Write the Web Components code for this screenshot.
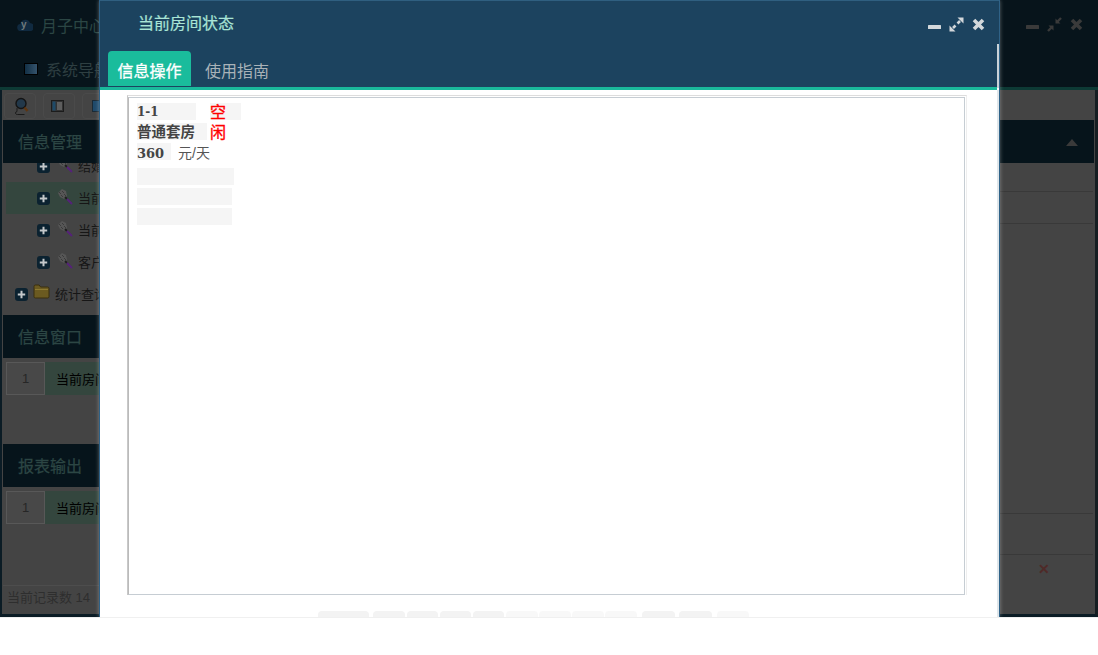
<!DOCTYPE html>
<html lang="zh"><head><meta charset="utf-8"><title>当前房间状态</title>
<style>
html,body{margin:0;height:100%;background:#fff;overflow:hidden}
body{font-family:"Liberation Sans","Noto Sans CJK SC",sans-serif}
desk-top{width:1098px;height:655px}
</style></head><body>
<desk-top>
  <back-window slot="back"></back-window>
  <room-dialog slot="front"></room-dialog>
</desk-top>
<script>
const FONT='"Liberation Sans","Noto Sans CJK SC",sans-serif';
const plus=`<svg width="13" height="13" viewBox="0 0 13 13"><rect width="13" height="13" rx="3" fill="#0b2230"/><path d="M6.5 2.8v7.4M2.8 6.5h7.4" stroke="#c4c8ca" stroke-width="2"/></svg>`;
const wand=`<svg width="16" height="16" viewBox="0 0 16 16"><path d="M1 4L5 0l4 2 1 5-3 3-4-2z" fill="#565656"/><path d="M2 3l2 2M5 2l2 2M4 6l2 2M7 5l2 2" stroke="#3a3a3a"/><path d="M8 8l2 2" stroke="#1f1f1f" stroke-width="1.800"/><path d="M10 10l5 5" stroke="#55207a" stroke-width="1.800"/></svg>`;
const folder=`<svg width="17" height="15" viewBox="0 0 17 15"><path d="M1 3.500V2.500Q1 1 2.500 1h3.600l1.500 2H14.500Q16 3 16 4.500v8.200Q16 14 14.500 14h-12Q1 14 1 12.700z" fill="#6b5a20" stroke="#3a2f0e"/><path d="M2 5.500h13" stroke="#8d7a32"/></svg>`;
function sh(el,html){el.attachShadow({mode:'open'}).innerHTML=html}
function def(n,fn){customElements.define(n,class extends HTMLElement{connectedCallback(){if(!this.shadowRoot)fn(this)}})}

def('desk-top',e=>sh(e,`<style>
:host{display:block;position:relative;overflow:hidden;background:#fff}
.line{position:absolute;left:0;right:0;top:617px;height:1px;background:#eee}
::slotted([slot=back]){position:absolute;left:0;top:0;width:1098px;height:617px}
::slotted([slot=front]){position:absolute;left:99px;top:0;width:901px;height:617px}
</style><div class="line"></div><slot name="back"></slot><slot name="front"></slot>`));

def('win-controls',e=>{const c=e.getAttribute('color')||'#d3d8db',back=e.hasAttribute('restore');
sh(e,`<style>:host{display:flex;align-items:flex-start;gap:8px;line-height:0}svg{display:block}</style>
<svg width="13" height="14" viewBox="0 0 13 14"><rect y="8" width="13" height="4" rx=".5" fill="${c}"/></svg>
<svg width="15" height="15" viewBox="0 0 15 15">${back
 ?`<path d="M14 1l-4 4M1 14l4-4" stroke="${c}" stroke-width="2.400"/><path d="M8.500 1.500v5h5zM6.500 13.500v-5h-5z" fill="${c}"/>`
 :`<path d="M11 4L8.500 6.500M4 11l2.500-2.500" stroke="${c}" stroke-width="2.600"/><path d="M8.500 0.500h6v6zM0.500 8.500v6h6z" fill="${c}"/>`}</svg>
<svg width="13" height="13" viewBox="0 0 13 13" style="margin-top:1px"><path d="M2 2l9 9M11 2l-9 9" stroke="${c}" stroke-width="3.600"/></svg>`)});

def('panel-head',e=>sh(e,`<style>:host{display:flex;align-items:center;height:43px;box-sizing:border-box;padding-bottom:2px;background:#06141b;color:#2c4644;font:16px ${FONT};-webkit-text-stroke:.25px #2c4644;padding-left:15px;flex:none;position:relative}
::slotted(svg){position:absolute;right:16px;top:19px}</style><slot></slot>`));

def('tree-row',e=>{const f=e.getAttribute('level')==='1',act=e.hasAttribute('active');
sh(e,`<style>:host{display:flex;align-items:center;height:32px;flex:none;margin-left:3px;padding-left:${f?9:31}px;color:#161616;font:13px/1 ${FONT};${act?'background:#34463e;':''}}
.t{white-space:nowrap;margin-left:5px}.ic{display:flex;margin-left:${f?5:7}px;margin-top:${f?-5:-3}px}.p{display:flex;margin-top:1px}</style>
<span class="p">${plus}</span><span class="ic">${f?folder:wand}</span><span class="t"><slot></slot></span>`)});

def('list-row',e=>sh(e,`<style>:host{display:flex;height:33px;margin:4px 0 0 3px;background:#34463e;color:#000;font:13px ${FONT};align-items:stretch;flex:none}
.n{width:37px;border:1px solid #585858;background:#484848;color:#262626;display:flex;align-items:center;justify-content:center;font-size:13px;margin-right:11px}
.t{display:flex;align-items:center;white-space:nowrap}</style><span class="n">${e.getAttribute('n')}</span><span class="t"><slot></slot></span>`));

def('back-window',e=>sh(e,`<style>
:host{display:flex;flex-direction:column;background:#444;box-sizing:border-box;border-bottom:3px solid #0b1c25;border-left:2px solid #0b1c25;border-right:3px solid #161e22;font:13px ${FONT}}
.hd{height:87px;flex:none;background:#07141b;display:flex;flex-direction:column;position:relative;margin:0 -3px 0 -2px}
.brand{display:flex;align-items:center;gap:8px;padding:14px 0 0 17px;color:#2b4644;font-size:16px;height:22px}
.nav{display:flex;align-items:center;gap:8px;padding:23px 0 0 24px;margin-top:-2px;color:#2e3f42;font-size:16px}
.sq{width:12px;height:10px;border:1px solid #000;background:linear-gradient(90deg,#123046,#35536c)}
win-controls{position:absolute;left:1026px;top:17px}
.teal{height:3px;background:#0d3a35;flex:none;margin:0 -3px 0 -2px}
.tools{height:30px;flex:none;display:flex;gap:7px;padding:3px 0 0 2px;box-sizing:border-box}
.tb{width:30px;height:24px;border:1px solid #4a4a4a;border-radius:4px;display:flex;align-items:center;justify-content:center}
.main{flex:1;display:flex;min-height:0;padding:0 1px 0 1px}
.l{width:300px;flex:none;display:flex;flex-direction:column}
.tree{height:152px;display:flex;flex-direction:column;justify-content:flex-end;overflow:hidden;padding-bottom:5px;box-sizing:border-box;flex:none}
.list{display:flex;flex-direction:column;flex:none}
.foot{flex:1;border-top:1px solid #4d4d4d;color:#2e2e2e;padding:4px 0 0 4px;font-size:13px;line-height:16px}
.r{flex:1;display:flex;flex-direction:column;min-width:0}
.row{border-bottom:1px solid #393939;flex:none;margin-right:1px}
.x{color:#4f2a28;font-size:14px;font-weight:bold;line-height:18px;padding-left:735px;padding-top:5px;height:32px;box-sizing:border-box}
</style>
<div class="hd"><div class="brand"><svg width="16" height="12" viewBox="0 0 16 12"><path d="M4 12a3.500 3.500 0 0 1-.6-7A5 5 0 0 1 13 4a4 4 0 0 1-.5 8z" fill="#102a40"/><text x="4" y="9" font-family="Liberation Sans" font-size="10" font-weight="bold" fill="#6f7a7c">y</text></svg><span>月子中心</span></div>
<div class="nav"><span class="sq"></span><span>系统导航</span></div><win-controls restore color="#3a3a3a"></win-controls></div>
<div class="teal"></div>
<div class="tools">
<span class="tb"><svg style="margin-left:2px" width="15" height="18" viewBox="0 0 15 18"><circle cx="7" cy="6.500" r="5" fill="#22384a" stroke="#141414" stroke-width="1.400"/><path d="M10.500 10.500l3 3.500" stroke="#5e3510" stroke-width="2.400"/><path d="M3 11v3.500Q1 15 1.500 16.500q.5 1 2 1h7" stroke="#1a1a1a" fill="none"/></svg></span>
<span class="tb"><svg style="margin-right:3px" width="13" height="12" viewBox="0 0 13 12"><rect x=".5" y=".5" width="12" height="11" fill="#333" stroke="#1c1c1c"/><rect x="1.500" y="1.500" width="3" height="9" fill="#1e4a68"/><path d="M6 3h5M6 5h5M6 7h5M6 9h5" stroke="#8a8a8a"/></svg></span>
<span class="tb"><svg width="13" height="12" viewBox="0 0 13 12"><rect x=".5" y=".5" width="12" height="11" fill="#1f4a6b" stroke="#1a2a36"/></svg></span>
</div>
<div class="main">
 <div class="l">
  <panel-head>信息管理</panel-head>
  <div class="tree">
   <tree-row>结婚信息</tree-row>
   <tree-row active>当前房间</tree-row>
   <tree-row>当前客户</tree-row>
   <tree-row>客户信息</tree-row>
   <tree-row level="1">统计查询</tree-row>
  </div>
  <panel-head>信息窗口</panel-head>
  <div class="list" style="height:86px"><list-row n="1">当前房间状态</list-row></div>
  <panel-head>报表输出</panel-head>
  <div class="list" style="height:98px"><list-row n="1">当前房间状态</list-row></div>
  <div class="foot">当前记录数 14</div>
 </div>
 <div class="r">
  <panel-head><svg width="12" height="7" viewBox="0 0 12 7"><path d="M6 0l6 7H0z" fill="#3a3a3a"/></svg></panel-head>
  <div class="row" style="height:28px"></div>
  <div class="row" style="height:31px"></div>
  <div class="row" style="height:289px"></div>
  <div class="row" style="height:40px"></div>
  <div class="x">✕</div>
 </div>
</div>`));

def('room-card',e=>sh(e,`<style>
:host{display:block;padding:5px 0 0 8px;font-family:"DejaVu Serif","Noto Sans CJK SC",serif;color:#444}
.r{display:flex;height:17px;margin-bottom:3px;position:relative}
.b{background:#f5f5f5;height:17px;line-height:19px;display:block;white-space:nowrap;font-weight:bold}
.s{position:absolute;left:73px;top:0;width:31px;height:17px;background:#f5f5f5}
.s span{position:absolute;left:0;top:-2px;width:16px;color:#f00;font:16px/20px "Noto Sans CJK SC",sans-serif;-webkit-text-stroke:.35px #f00}
.u{font:14px/20px "Liberation Sans","Noto Sans CJK SC",sans-serif;color:#555;margin-left:7px}
.e{background:#f5f5f5;height:17px;margin-bottom:3px}
</style>
<div class="r"><span class="b" style="width:59px;font-size:12px">1-1</span><span class="s"><span>空闲</span></span></div>
<div class="r"><span class="b" style="width:70px;font:bold 14.500px/16px 'Noto Sans CJK SC',sans-serif">普通套房</span></div>
<div class="r"><span class="b" style="width:34px;font-size:13px;line-height:22px">360</span><span class="u">元/天</span></div>
<div class="e" style="width:97px;margin-top:8px"></div>
<div class="e" style="width:95px"></div>
<div class="e" style="width:95px"></div>`));

def('ghost-tabs',e=>{const w=[[51,0,1],[32,4,1],[31,2,1],[31,2,1],[31,2,1],[32,2,.6],[32,1,.6],[32,1,.6],[32,1,.6],[33,5,1],[33,4,1],[32,5,.6]];
sh(e,`<style>:host{display:flex;align-items:flex-end;height:22px;padding-left:191px;box-sizing:border-box;flex:none}
i{display:block;flex:none;height:6px;background:#f3f3f3;border-radius:4px 4px 0 0}</style>`+w.map(a=>`<i style="width:${a[0]}px;margin-left:${a[1]}px;opacity:${a[2]}"></i>`).join(''))});

def('room-dialog',e=>sh(e,`<style>
:host{display:flex;flex-direction:column;background:#fff;border-left:1px solid #2f6287;border-right:1px solid #2f6287;box-sizing:border-box;box-shadow:0 0 4px rgba(255,255,255,.35);font-family:${FONT}}
.hd{height:87px;flex:none;background:#1c435f;border-top:1px solid #2f5f80;box-sizing:border-box;display:flex;flex-direction:column;position:relative}
.ti{color:#a9e4d6;font-size:16px;line-height:20px;padding:13px 0 0 38px;height:50px;box-sizing:border-box;flex:none;-webkit-text-stroke:.2px #a9e4d6}
win-controls{position:absolute;left:828px;top:16px}
.tabs{display:flex;align-items:flex-end;padding:0 0 1px 8px;flex:1;gap:14px}
.on{width:83px;height:35px;background:#1abc9c;color:#fff;border-radius:4px 4px 0 0;font-size:16px;-webkit-text-stroke:.3px #fff;display:flex;align-items:center;justify-content:center;box-sizing:border-box;padding-top:2px}
.off{color:#a9b2b8;font-size:16px;height:35px;display:flex;align-items:center;padding-top:2px;box-sizing:border-box}
.line{height:3px;background:#1ab99c;flex:none;margin-right:2px}
.edge{position:absolute;right:0;top:43px;width:2px;height:44px;background:#c9d2d8}
.body{flex:1;min-height:0;display:flex;flex-direction:column;padding:5px 30px 0 27px;border-right:2px solid #dfe6ea;box-sizing:border-box}
.fr{flex:none;height:500px;border:1px solid #ddd;border-left-color:#c8c8c8;border-right-color:#eee;border-bottom:none;padding:1px 1px 0 0;box-sizing:border-box}
.in{height:100%;border:1px solid #c6cdd3;border-left-color:#bbb;box-sizing:border-box}
</style>
<div class="hd"><div class="ti">当前房间状态</div><win-controls></win-controls>
<div class="tabs"><span class="on">信息操作</span><span class="off">使用指南</span></div><div class="edge"></div></div>
<div class="line"></div>
<div class="body"><div class="fr"><div class="in"><room-card></room-card></div></div><ghost-tabs></ghost-tabs></div>`));
</script>
</body></html>
